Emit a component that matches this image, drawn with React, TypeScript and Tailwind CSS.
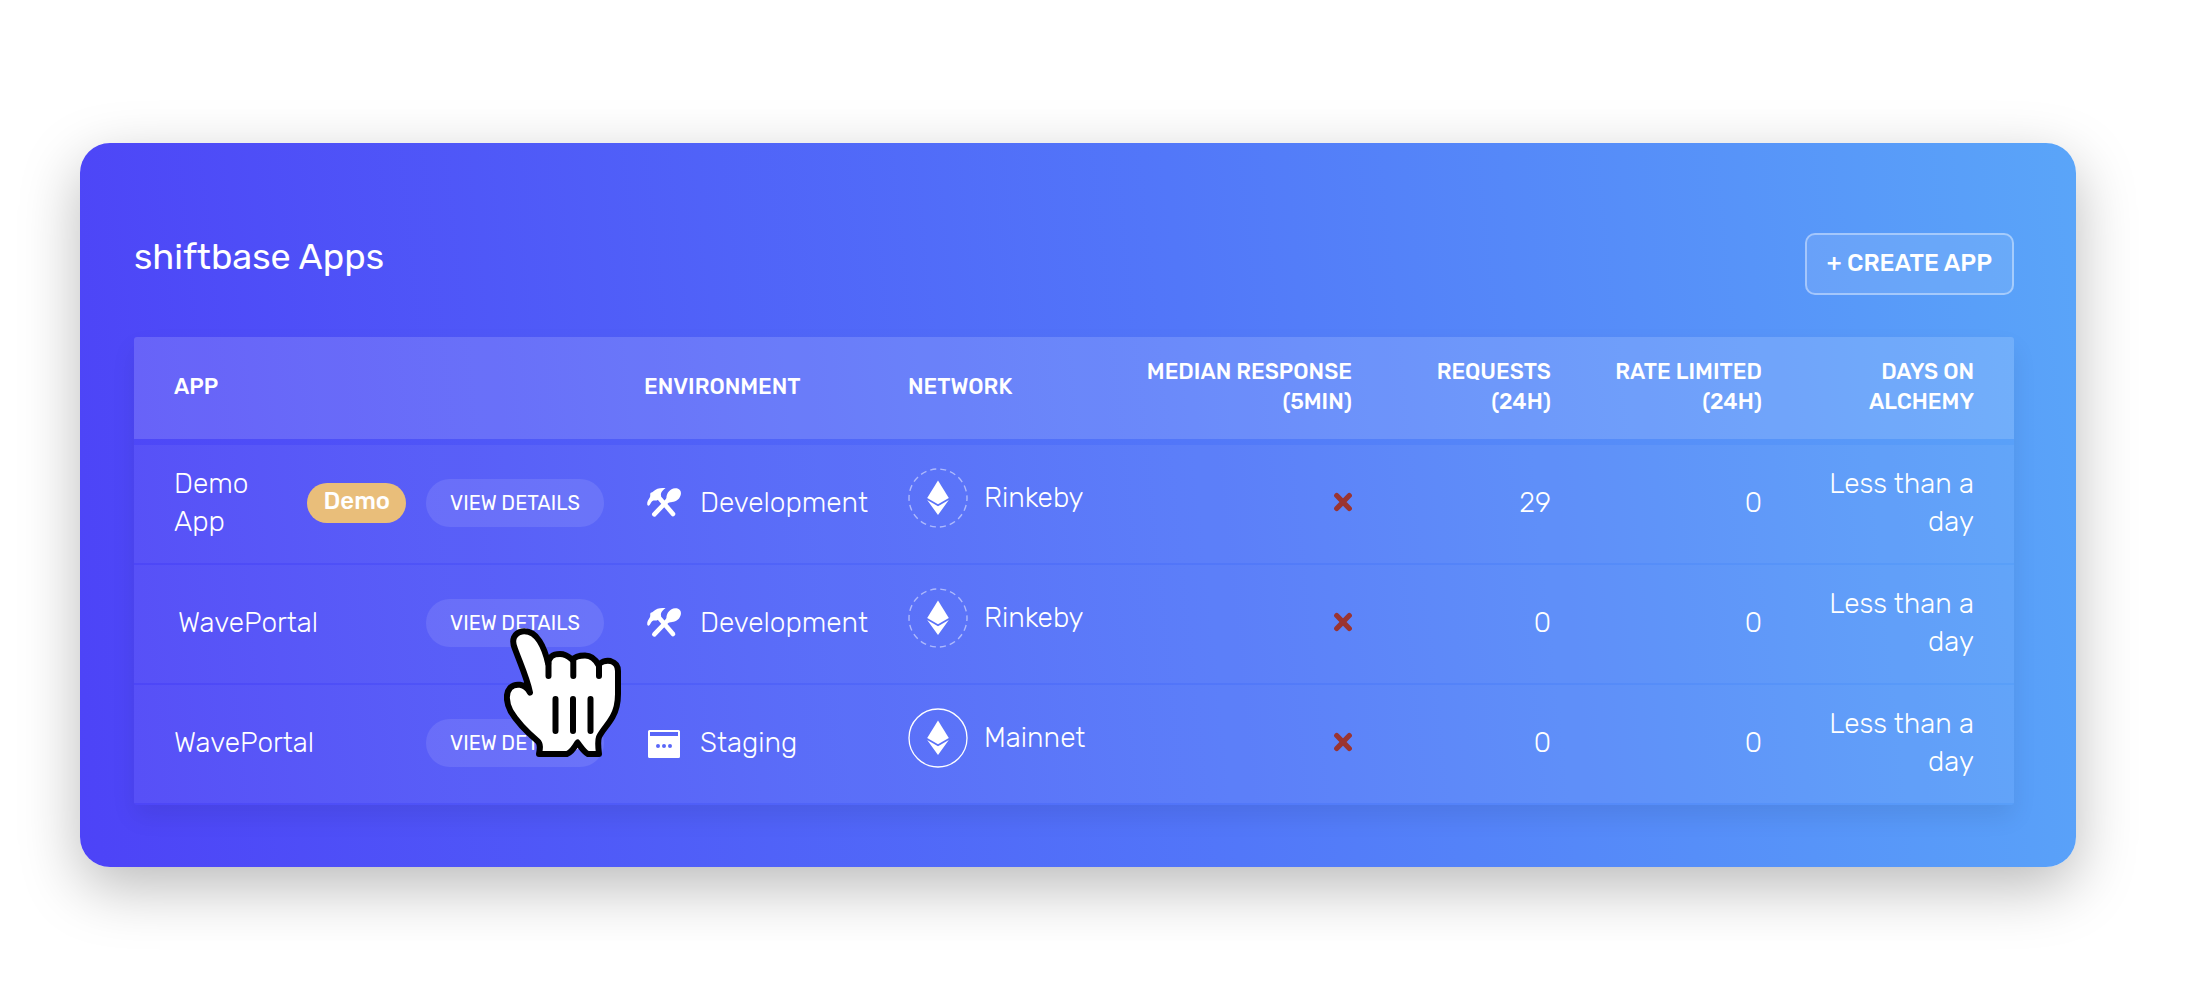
import React from "react";

type Env = "Development" | "Staging";

interface AppRow {
  name: string;
  demo?: boolean;
  pointed?: boolean;
  env: Env;
  network: string;
  testnet: boolean;
  requests: number;
  limited: number;
  days: string;
}

const rows: AppRow[] = [
  { name: "Demo App", demo: true, env: "Development", network: "Rinkeby", testnet: true, requests: 29, limited: 0, days: "Less than a day" },
  { name: "WavePortal", pointed: true, env: "Development", network: "Rinkeby", testnet: true, requests: 0, limited: 0, days: "Less than a day" },
  { name: "WavePortal", env: "Staging", network: "Mainnet", testnet: false, requests: 0, limited: 0, days: "Less than a day" },
];

function ToolsIcon() {
  return (
    <svg className="h-8 w-9 shrink-0" viewBox="0 0 36 32" fill="currentColor" aria-hidden="true">
      <path d="M19.6 1.2C14.5.6 10.2 1.6 7.2 4.4 5.8 5.7 4.8 5 4.3 6.6c-.3 1.3.3 2.2-.4 3.6C2.6 12.4.9 14.5 1.2 17.200c.2 1.700 1.600 1.900 2.600.5 1.200-1.700 1.600-3.400 3.600-4.300 2.200.2 3.300.3 4.600-.7l3.200-3.500c-.7-2.300-.3-5 4.400-8z" />
      <path d="M12 9.500 27 27" stroke="currentColor" strokeWidth="4.600" strokeLinecap="round" />
      <path d="M8.300 27.300 23 12" stroke="currentColor" strokeWidth="4.600" strokeLinecap="round" />
      <path d="M20.200 14.200c-.8-1.200.1-1.800.2-3.200.2-5 3.600-9.400 8.600-9.800 4-.3 6.400 2.200 5.900 5.900-.6 4.400-4.300 7.700-8.900 7.900-1.800.1-2.200 1-3.800.4z" />
    </svg>
  );
}

function StagingIcon() {
  return (
    <svg className="h-8 w-9 shrink-0" viewBox="0 0 36 32" fill="currentColor" fillRule="evenodd" aria-hidden="true">
      <path d="M3.500 3h29a1.500 1.500 0 0 1 1.500 1.500v25a1.500 1.500 0 0 1-1.500 1.500h-29a1.500 1.500 0 0 1-1.500-1.500v-25A1.500 1.500 0 0 1 3.500 3zM4 5v4h28V5zM12 17a2 2 0 1 0 0 4 2 2 0 0 0 0-4zm6 0a2 2 0 1 0 0 4 2 2 0 0 0 0-4zm6 0a2 2 0 1 0 0 4 2 2 0 0 0 0-4z" />
    </svg>
  );
}

function EthereumIcon({ dashed }: { dashed: boolean }) {
  return (
    <svg className="size-[60px] shrink-0" viewBox="0 0 60 60" fill="none" aria-hidden="true">
      {dashed ? (
        <circle cx="30" cy="30" r="29" stroke="white" strokeOpacity="0.5" strokeWidth="1.400" strokeDasharray="6.070 4.052" strokeDashoffset="3" />
      ) : (
        <circle cx="30" cy="30" r="29" stroke="white" strokeWidth="1.300" />
      )}
      <path d="M30 12.500 40.800 30 30 36.300 19.200 30z" fill="white" />
      <path d="M19.200 32 30 38.300 40.800 32 30 47z" fill="white" />
    </svg>
  );
}

function HandPointer() {
  return (
    <svg className="pointer-events-none absolute left-[78px] top-[29px] z-10 h-[130px] w-[118px]" viewBox="0 0 118 130" aria-hidden="true">
      <path
        d="M26 64.500C23 50 16.500 36 11 21 7 12 10 5 18 3.500 26 2.500 31 6 35.500 13 40 20 42.500 28 44.200 36 45 28 49 26 56 26c7 0 10 4 12.500 6 2-3 6-4.500 12.500-4.500 6 0 10 3 13.500 9.500 2-3 7-5 12-4 5 1.500 7.500 5 7.500 10V66c0 10-2 17-5.500 23-4.500 8-10 13-13.500 20-1.500 4-1 9 0 17H84c-4-2-7-7-10.500-11.500-3 5-6.500 10-10.500 11.500H35c1-5 2-10-1.500-13C23 104 13 94 6.500 83 2 74 1.500 65 6 60c5-5 15-5 20 4.500z"
        fill="white"
        stroke="black"
        strokeWidth="6"
        strokeLinejoin="round"
      />
      <path d="M44.500 36v12M69.300 33v15M95 36v12M51.500 71v32M69 71v32M86.500 71v32" stroke="black" strokeWidth="6" strokeLinecap="round" />
    </svg>
  );
}

function CrossIcon() {
  return (
    <svg className="ml-auto block size-5" viewBox="0 0 20 20" role="img" aria-label="No data">
      <path d="M4.700 3.500 17.300 16.500M17.300 3.500 4.700 16.500" stroke="#9b3430" strokeWidth="5.200" strokeLinecap="round" />
    </svg>
  );
}

const head = "bg-white/15 pb-0.5 font-medium";
const cell = "border-b-2 border-transparent bg-white/6 bg-clip-padding";

export default function App() {
  return (
    <main className="px-[80px] pt-[143px] pb-[140px] font-['Rubik','Roboto',sans-serif] text-white">
      <section className="mr-[43px] rounded-[30px] bg-[linear-gradient(84deg,#4d43f7_0%,#5277f9_56%,#5aa5f9_100%)] pt-[90px] pr-[62px] pb-[62px] pl-[54px] shadow-[0_20px_60px_rgba(0,0,0,0.27)]">
        <header className="flex items-start justify-between">
          <h1 className="pt-1 text-[36px] leading-[40px]">shiftbase Apps</h1>
          <button type="button" className="h-[62px] rounded-[10px] border-2 border-white/40 bg-white/10 px-5 pb-0.5 text-[24px] font-medium">
            + CREATE APP
          </button>
        </header>

        <table className="mt-[42px] w-full table-fixed border-separate border-spacing-0 rounded-[3px] shadow-[0_12px_24px_rgba(0,0,0,0.08)]">
          <colgroup>
            <col />
            <col className="w-[264px]" />
            <col className="w-[240px]" />
            <col className="w-[244px]" />
            <col className="w-[199px]" />
            <col className="w-[211px]" />
            <col className="w-[232px]" />
          </colgroup>
          <thead>
            <tr className="h-[102px] text-left text-[22px] leading-[30px]">
              <th scope="col" className={`${head} rounded-tl-[3px] pr-5 pl-10`}>APP</th>
              <th scope="col" className={`${head} px-5`}>ENVIRONMENT</th>
              <th scope="col" className={`${head} px-5`}>NETWORK</th>
              <th scope="col" className={`${head} pr-5 text-right`}>MEDIAN RESPONSE (5MIN)</th>
              <th scope="col" className={`${head} px-5 text-right`}>REQUESTS (24H)</th>
              <th scope="col" className={`${head} px-5 text-right`}>RATE LIMITED (24H)</th>
              <th scope="col" className={`${head} rounded-tr-[3px] pr-10 pl-16 text-right`}>DAYS ON ALCHEMY</th>
            </tr>
          </thead>
          <tbody className="text-[28px] leading-[38px] font-light before:block before:h-[6px] before:content-['']">
            {rows.map((row, i) => (
              <tr key={i} className="h-[120px]">
                <td className={`${cell} pr-5 pb-0.5 pl-10`}>
                  <div className="flex items-center">
                    <span className={row.demo ? "w-[100px]" : row.pointed ? "pl-1" : ""}>{row.name}</span>
                    <span className="ml-auto flex items-center gap-5">
                      {row.demo && (
                        <span className="flex h-10 items-center rounded-full bg-[#e9be7a] px-4 pb-1 text-[24px] font-medium">Demo</span>
                      )}
                      <span className="relative flex">
                        <button type="button" className="h-12 w-[178px] rounded-full bg-white/10 text-[20px] font-normal">
                          VIEW DETAILS
                        </button>
                        {row.pointed && <HandPointer />}
                      </span>
                    </span>
                  </div>
                </td>
                <td className={`${cell} pr-5 pb-0.5 pl-[22px]`}>
                  <div className="flex items-center gap-[18px]">
                    {row.env === "Staging" ? <StagingIcon /> : <ToolsIcon />}
                    <span>{row.env}</span>
                  </div>
                </td>
                <td className={`${cell} px-5 pb-3`}>
                  <div className="flex items-center gap-4">
                    <EthereumIcon dashed={row.testnet} />
                    <span>{row.network}</span>
                  </div>
                </td>
                <td className={`${cell} px-5 pb-1`}><CrossIcon /></td>
                <td className={`${cell} px-5 pb-0.5 text-right`}>{row.requests}</td>
                <td className={`${cell} px-5 pb-0.5 text-right`}>{row.limited}</td>
                <td className={`${cell} pr-10 pb-0.5 pl-5 text-right`}>{row.days}</td>
              </tr>
            ))}
          </tbody>
        </table>
      </section>
    </main>
  );
}
